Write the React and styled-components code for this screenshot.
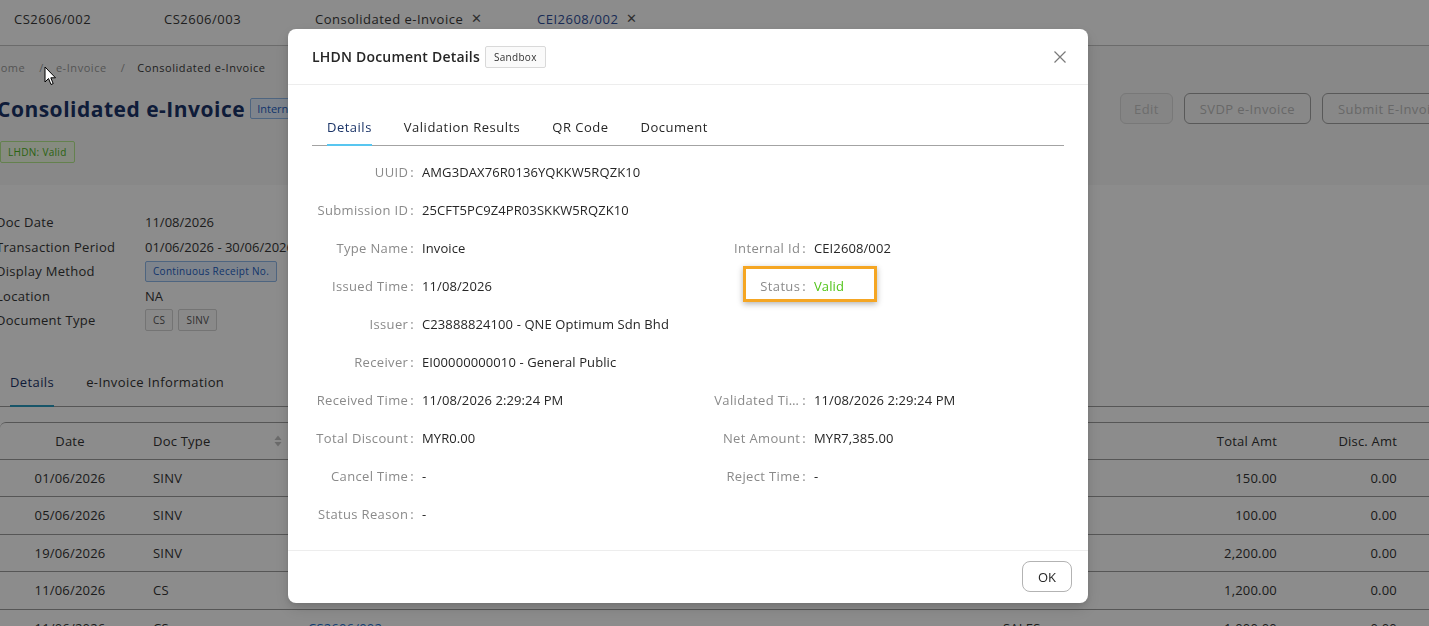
import React from 'react';
import styled, { createGlobalStyle } from 'styled-components';

const GlobalStyle = createGlobalStyle`
  html, body { margin: 0; padding: 0; background: #fff; }
  body {
    font-family: "Open Sans", "Noto Sans", sans-serif;
    font-size: 13px;
    color: #333;
    overflow: hidden;
  }
  * { box-sizing: border-box; }
`;

const Page = styled.div`
  position: relative;
  width: 1429px;
  height: 626px;
  overflow: hidden;
  background: #fff;
`;

const TopTabs = styled.div`
  height: 46px;
  display: flex;
  align-items: center;
  padding: 0 0 8px 14px;
  border-bottom: 1px solid #c4c4c4;
`;

const TopTab = styled.div`
  flex: none;
  width: ${p => (p.$w ? `${p.$w}px` : 'auto')};
  display: flex;
  align-items: center;
  gap: 8px;
  font-size: 13px;
  letter-spacing: 0.5px;
  color: ${p => (p.$active ? '#2f4f9c' : '#3a3a3a')};
`;

const TabClose = styled.span`
  font-size: 13px;
  color: #555;
  line-height: 1;
`;

const Header = styled.section`
  background: #f8f8f8;
  padding: 13px 0 22px;
`;

const Breadcrumb = styled.div`
  display: flex;
  align-items: center;
  height: 16px;
  margin-left: -8px;
  font-size: 11px;
  letter-spacing: 0.55px;
  color: #9a9a9a;
`;

const Crumb = styled.span`
  color: ${p => (p.$current ? '#3a3a3a' : '#9a9a9a')};
`;

const Sep = styled.span`
  margin: 0 12px 0 14px;
  color: #9a9a9a;
`;

const TitleRow = styled.div`
  display: flex;
  align-items: center;
  margin: 18px -32px 0 -3px;
  height: 31px;
`;

const Title = styled.h1`
  margin: 0;
  font-size: 21px;
  font-weight: 700;
  color: #1b3468;
  letter-spacing: 0.5px;
`;

const InternBadge = styled.span`
  margin-left: 5px;
  padding: 2px 6px;
  font-size: 11px;
  color: #1d5fc4;
  background: #e6f1ff;
  border: 1px solid #8fb8ea;
  border-radius: 2px;
`;

const Actions = styled.div`
  margin-left: auto;
  display: flex;
  gap: 11px;
`;

const ActionButton = styled.button`
  flex: none;
  height: 31px;
  padding: 0 ${p => (p.$disabled ? 13 : 15)}px;
  font-family: inherit;
  font-size: 13px;
  letter-spacing: 0.4px;
  white-space: nowrap;
  border-radius: 6px;
  background: ${p => (p.$disabled ? '#f2f2f2' : 'transparent')};
  border: 1px solid ${p => (p.$disabled ? '#dadada' : '#a3a3a3')};
  color: ${p => (p.$disabled ? '#c6c6c6' : '#bdbdbd')};
`;

const StatusTag = styled.span`
  display: inline-flex;
  align-items: center;
  margin-top: 17px;
  height: 22px;
  padding: 0 7px;
  font-size: 10px;
  letter-spacing: 0.3px;
  color: #4fb51e;
  background: #f4fdea;
  border: 1px solid #b7eb8f;
  border-radius: 2px;
`;

const InfoGrid = styled.div`
  display: grid;
  grid-template-columns: 149px 1fr;
  grid-auto-rows: 24.5px;
  align-items: center;
  margin: 25px 0 0 -4px;
  font-size: 13px;
  color: #363636;
`;

const InfoLabel = styled.div`
  letter-spacing: 0.3px;
`;

const InfoValue = styled.div`
  display: flex;
  gap: 5px;
  align-items: center;
`;

const OutlineTag = styled.span`
  display: inline-flex;
  align-items: center;
  height: ${p => (p.$tall ? 22 : 21)}px;
  padding: 0 7px;
  font-size: 10px;
  letter-spacing: 0.3px;
  border-radius: 2px;
  color: ${p => (p.$blue ? '#1d5fc4' : '#555')};
  background: ${p => (p.$blue ? '#e6f1ff' : '#fafafa')};
  border: 1px solid ${p => (p.$blue ? '#8fb8ea' : '#d4d4d4')};
`;

const PageTabs = styled.div`
  display: flex;
  gap: 32px;
  height: 47px;
  margin-top: 27px;
  padding-left: 10px;
  border-bottom: 1px solid #9d9d9d;
`;

const PageTab = styled.div`
  display: flex;
  align-items: center;
  font-size: 13px;
  letter-spacing: 0.4px;
  color: ${p => (p.$active ? '#1b3468' : '#333')};
  border-bottom: 2px solid ${p => (p.$active ? '#2a9bc0' : 'transparent')};
  margin-bottom: -1px;
`;

const Table = styled.div`
  margin-top: 15px;
  border-top: 1px solid #9d9d9d;
  border-top-left-radius: 6px;
`;

const TRow = styled.div`
  display: grid;
  grid-template-columns: 140px 155px 1fr 160px 140px 120px 19px;
  height: ${p => (p.$head ? 37 : 37.5)}px;
  align-items: center;
  border-bottom: 1px solid #9d9d9d;
  font-size: 13px;
  letter-spacing: 0.2px;
  color: #333;
`;

const Cell = styled.div`
  padding: 0 13px;
  display: flex;
  align-items: center;
  justify-content: ${p => (p.$align === 'center' ? 'center' : p.$align === 'right' ? 'flex-end' : 'space-between')};
  white-space: nowrap;
`;

const LinkText = styled.span`
  color: #1f6fd1;
`;

const SortIcon = () => (
  <svg width="8" height="12" viewBox="0 0 8 12">
    <path d="M4 0.5 L7.5 5 H0.5 Z" fill="#c2c2c2" />
    <path d="M4 11.5 L7.5 7 H0.5 Z" fill="#c2c2c2" />
  </svg>
);

/* ------- modal ------- */

const Overlay = styled.div`
  position: fixed;
  inset: 0;
  background: rgba(0, 0, 0, 0.45);
  padding: 29px 0 0 288px;
  z-index: 10;
`;

const Modal = styled.div`
  width: 800px;
  height: 574px;
  background: #fff;
  border-radius: 8px;
  box-shadow: 0 6px 16px rgba(0, 0, 0, 0.12), 0 3px 6px rgba(0, 0, 0, 0.1);
  display: flex;
  flex-direction: column;
  overflow: hidden;
`;

const ModalHeader = styled.div`
  height: 56px;
  flex: none;
  display: flex;
  align-items: center;
  padding: 0 21px 0 24px;
  border-bottom: 1px solid #ededed;
`;

const ModalTitle = styled.div`
  font-size: 14px;
  font-weight: 600;
  letter-spacing: 0.2px;
  color: #262626;
`;

const SandboxTag = styled.span`
  margin-left: 5px;
  height: 22px;
  display: inline-flex;
  align-items: center;
  padding: 0 8px;
  font-size: 10px;
  letter-spacing: 0.3px;
  color: #333;
  background: #fafafa;
  border: 1px solid #d9d9d9;
  border-radius: 2px;
`;

const CloseBtn = styled.button`
  margin-left: auto;
  width: 14px;
  height: 14px;
  padding: 0;
  border: 0;
  background: none;
  display: flex;
  align-items: center;
  justify-content: center;
`;

const ModalBody = styled.div`
  flex: 1;
  padding: 24px 24px 0;
`;

const ModalTabs = styled.div`
  display: flex;
  gap: 32px;
  height: 37px;
  padding-left: 15px;
  border-bottom: 1px solid #a3a3a3;
`;

const ModalTab = styled.div`
  display: flex;
  align-items: center;
  font-size: 13px;
  letter-spacing: 0.5px;
  color: ${p => (p.$active ? '#1b3468' : '#262626')};
  border-bottom: 2px solid ${p => (p.$active ? '#58c6f0' : 'transparent')};
  margin-bottom: -1px;
`;

const Fields = styled.div`
  display: grid;
  grid-template-columns: 110px 266px 126px 1fr;
  grid-auto-rows: 38px;
  margin-top: 7px;
  align-items: center;
`;

const Label = styled.div`
  position: relative;
  display: flex;
  justify-content: flex-end;
  align-items: center;
  padding-left: ${p => (p.$right ? 16 : 0)}px;
  color: #8a8a8a;
  font-size: 13px;
  letter-spacing: 0.35px;
  min-width: 0;
  height: 100%;
`;

const LabelText = styled.span`
  min-width: 0;
  max-width: ${p => (p.$right ? '86px' : 'none')};
  overflow: hidden;
  text-overflow: ellipsis;
  white-space: nowrap;
`;

const Colon = styled.span`
  margin: 0 8px 0 2px;
`;

const Value = styled.div`
  font-size: 13px;
  letter-spacing: 0.1px;
  color: ${p => (p.$green ? '#52c41a' : '#262626')};
  white-space: nowrap;
`;

const Highlight = styled.span`
  position: absolute;
  left: 55px;
  top: -1px;
  width: 134px;
  height: 36px;
  border: 3px solid #f5a623;
  box-shadow: 0 2px 6px rgba(0, 0, 0, 0.3);
  pointer-events: none;
`;

const ModalFooter = styled.div`
  height: 53px;
  flex: none;
  display: flex;
  align-items: center;
  justify-content: flex-end;
  padding: 0 16px 1px;
  border-top: 1px solid #ededed;
`;

const OkButton = styled.button`
  width: 50px;
  height: 31px;
  font-family: inherit;
  font-size: 13px;
  color: #262626;
  background: #fff;
  border: 1px solid #b3b3b3;
  border-radius: 8px;
`;

const Cursor = styled.svg`
  position: fixed;
  left: 44px;
  top: 66px;
  z-index: 20;
`;

const info = [
  ['Doc Date', '11/08/2026'],
  ['Transaction Period', '01/06/2026 - 30/06/2026'],
  ['Display Method', 'badge'],
  ['Location', 'NA'],
  ['Document Type', 'types'],
];

const rows = [
  ['01/06/2026', 'SINV', 'SINV2606/001', 'SALES', '150.00', '0.00'],
  ['05/06/2026', 'SINV', 'SINV2606/002', 'SALES', '100.00', '0.00'],
  ['19/06/2026', 'SINV', 'SINV2606/003', 'SALES', '2,200.00', '0.00'],
  ['11/06/2026', 'CS', 'CS2606/001', 'SALES', '1,200.00', '0.00'],
  ['11/06/2026', 'CS', 'CS2606/002', 'SALES', '1,000.00', '0.00'],
];

const fields = [
  [['UUID', 'AMG3DAX76R0136YQKKW5RQZK10'], null],
  [['Submission ID', '25CFT5PC9Z4PR03SKKW5RQZK10'], null],
  [['Type Name', 'Invoice'], ['Internal Id', 'CEI2608/002']],
  [['Issued Time', '11/08/2026'], ['Status', 'Valid', true]],
  [['Issuer', 'C23888824100 - QNE Optimum Sdn Bhd'], null],
  [['Receiver', 'EI00000000010 - General Public'], null],
  [['Received Time', '11/08/2026 2:29:24 PM'], ['Validated Time', '11/08/2026 2:29:24 PM']],
  [['Total Discount', 'MYR0.00'], ['Net Amount', 'MYR7,385.00']],
  [['Cancel Time', '-'], ['Reject Time', '-']],
  [['Status Reason', '-'], null],
];

export default function App() {
  return (
    <>
      <GlobalStyle />
      <Page>
        <TopTabs>
          <TopTab $w={150}>CS2606/002</TopTab>
          <TopTab $w={151}>CS2606/003</TopTab>
          <TopTab $w={222}>Consolidated e-Invoice <TabClose>✕</TabClose></TopTab>
          <TopTab $active>CEI2608/002 <TabClose>✕</TabClose></TopTab>
        </TopTabs>

        <Header>
          <Breadcrumb>
            <Crumb>Home</Crumb>
            <Sep>/</Sep>
            <Crumb>e-Invoice</Crumb>
            <Sep>/</Sep>
            <Crumb $current>Consolidated e-Invoice</Crumb>
          </Breadcrumb>
          <TitleRow>
            <Title>Consolidated e-Invoice</Title>
            <InternBadge>Internal</InternBadge>
            <Actions>
              <ActionButton $disabled>Edit</ActionButton>
              <ActionButton>SVDP e-Invoice</ActionButton>
              <ActionButton>Submit E-Invoice</ActionButton>
            </Actions>
          </TitleRow>
          <StatusTag>LHDN: Valid</StatusTag>
        </Header>

        <InfoGrid>
          {info.map(([k, v]) => (
            <React.Fragment key={k}>
              <InfoLabel>{k}</InfoLabel>
              <InfoValue>
                {v === 'badge' ? (
                  <OutlineTag $blue>Continuous Receipt No.</OutlineTag>
                ) : v === 'types' ? (
                  <>
                    <OutlineTag $tall>CS</OutlineTag>
                    <OutlineTag $tall>SINV</OutlineTag>
                  </>
                ) : (
                  v
                )}
              </InfoValue>
            </React.Fragment>
          ))}
        </InfoGrid>

        <PageTabs>
          <PageTab $active>Details</PageTab>
          <PageTab>e-Invoice Information</PageTab>
        </PageTabs>

        <Table>
          <TRow $head>
            <Cell $align="center">Date</Cell>
            <Cell>Doc Type <SortIcon /></Cell>
            <Cell>Doc No.</Cell>
            <Cell>Account</Cell>
            <Cell $align="right">Total Amt</Cell>
            <Cell $align="right">Disc. Amt</Cell>
            <Cell />
          </TRow>
          {rows.map((r, i) => (
            <TRow key={i}>
              <Cell $align="center">{r[0]}</Cell>
              <Cell>{r[1]}</Cell>
              <Cell><LinkText>{r[2]}</LinkText></Cell>
              <Cell>{r[3]}</Cell>
              <Cell $align="right">{r[4]}</Cell>
              <Cell $align="right">{r[5]}</Cell>
              <Cell />
            </TRow>
          ))}
        </Table>
      </Page>

      <Overlay>
        <Modal>
          <ModalHeader>
            <ModalTitle>LHDN Document Details</ModalTitle>
            <SandboxTag>Sandbox</SandboxTag>
            <CloseBtn aria-label="Close">
              <svg width="12" height="12" viewBox="0 0 12 12">
                <path d="M0.5 0.5 L11.5 11.5 M11.5 0.5 L0.5 11.5" stroke="#7a7a7a" strokeWidth="1.2" />
              </svg>
            </CloseBtn>
          </ModalHeader>
          <ModalBody>
            <ModalTabs>
              <ModalTab $active>Details</ModalTab>
              <ModalTab>Validation Results</ModalTab>
              <ModalTab>QR Code</ModalTab>
              <ModalTab>Document</ModalTab>
            </ModalTabs>
            <Fields>
              {fields.map(([l, r], i) => (
                <React.Fragment key={i}>
                  <Label>
                    <LabelText>{l[0]}</LabelText>
                    <Colon>:</Colon>
                  </Label>
                  <Value>{l[1]}</Value>
                  {r ? (
                    <>
                      <Label $right>
                        <LabelText $right>{r[0]}</LabelText>
                        <Colon>:</Colon>
                        {r[2] && <Highlight />}
                      </Label>
                      <Value $green={r[2]}>{r[1]}</Value>
                    </>
                  ) : (
                    <>
                      <div />
                      <div />
                    </>
                  )}
                </React.Fragment>
              ))}
            </Fields>
          </ModalBody>
          <ModalFooter>
            <OkButton>OK</OkButton>
          </ModalFooter>
        </Modal>
      </Overlay>

      <Cursor width="13" height="20" viewBox="0 0 13 20">
        <path d="M1 1 L1 16 L4.5 12.5 L7 18.5 L9.2 17.6 L6.8 11.8 L11.5 11.8 Z" fill="#fff" stroke="#000" strokeWidth="1" strokeLinejoin="round" />
      </Cursor>
    </>
  );
}
